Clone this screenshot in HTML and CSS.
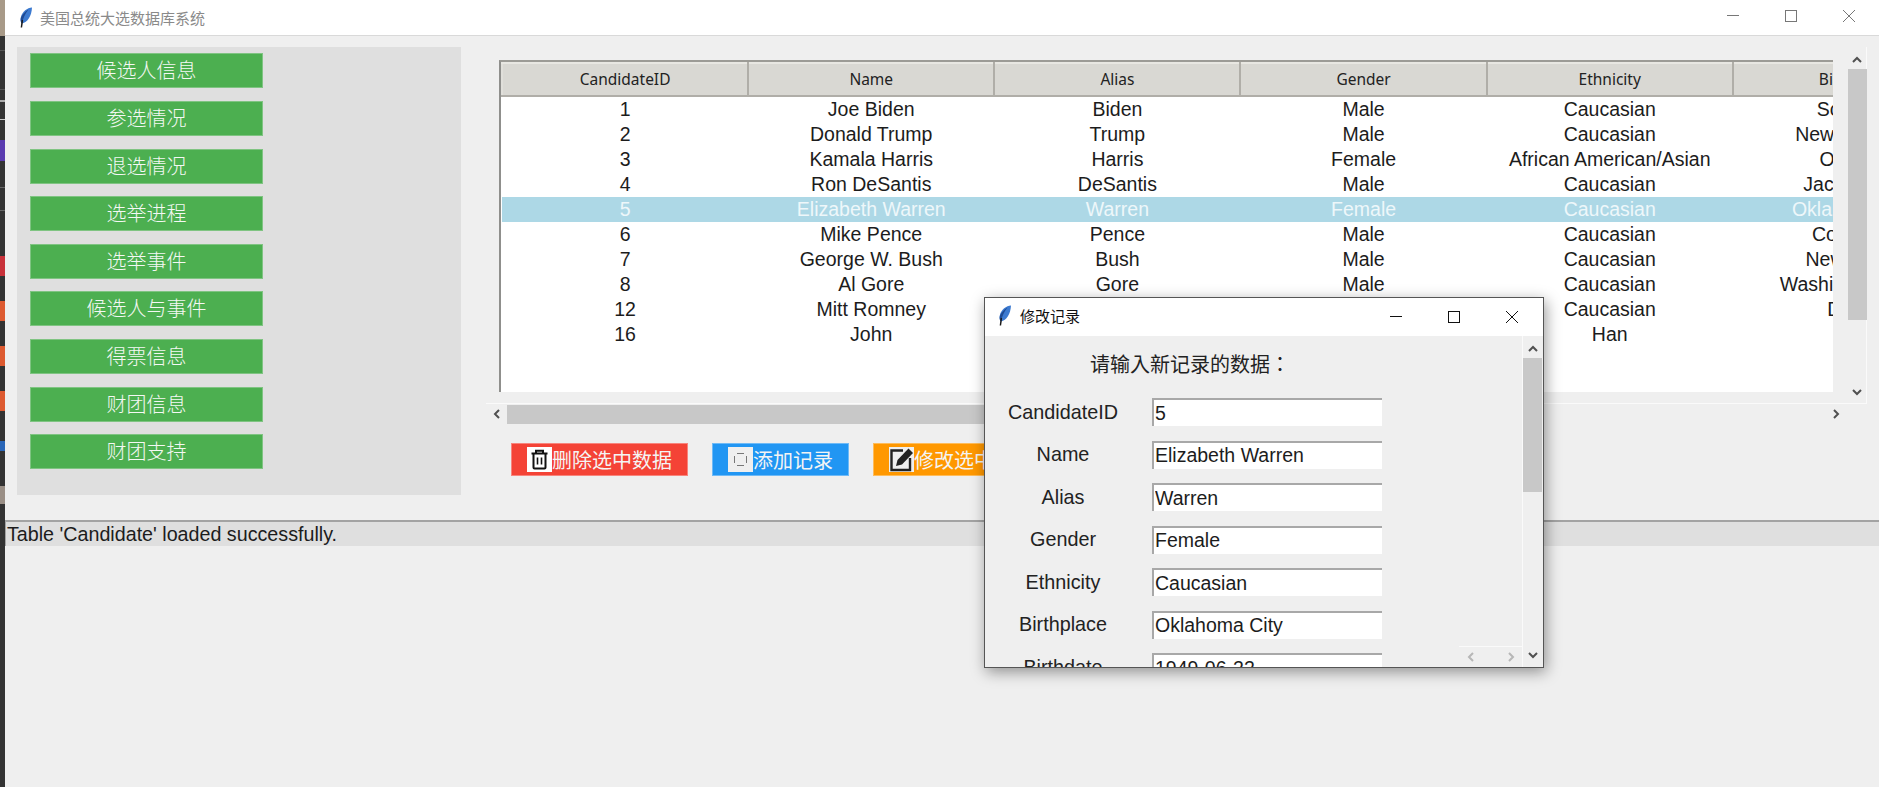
FILE: index.html
```html
<!DOCTYPE html>
<html lang="zh-CN">
<head>
    <meta charset="UTF-8">
    <title>美国总统大选数据库系统</title>
    <link rel="stylesheet" href="styles.css">
</head>
<body>
    <svg class="defs" width="0" height="0">
        <defs>
            <symbol id="feather" viewBox="0 0 14 21">
                <path d="M13 0.5C8.5 0.8 3 4.5 1.8 10.5 1.2 13.5 1.8 15.5 3 16.5 8.5 15.5 12.6 9 13 0.5Z" fill="#3c7ad0"/>
                <path d="M9.5 2.5C6 4.5 2.8 8 1.8 11 1.4 13.5 1.8 15.5 3 16.5 4 11 6 7 9.5 2.5Z" fill="#1d4a94"/>
                <path d="M3.4 13 2.4 20.5" fill="none" stroke="#1a1a1a" stroke-width="1.5"/>
            </symbol>
            <symbol id="up" viewBox="0 0 10 7">
                <path d="M1 6 5 2 9 6" fill="none" stroke="#505050" stroke-width="2"/>
            </symbol>
            <symbol id="down" viewBox="0 0 10 7">
                <path d="M1 1 5 5 9 1" fill="none" stroke="#505050" stroke-width="2"/>
            </symbol>
            <symbol id="left" viewBox="0 0 7 10">
                <path d="M6 1 2 5 6 9" fill="none" stroke="#505050" stroke-width="2"/>
            </symbol>
            <symbol id="right" viewBox="0 0 7 10">
                <path d="M1 1 5 5 1 9" fill="none" stroke="#505050" stroke-width="2"/>
            </symbol>
        </defs>
    </svg>

    <div class="desktop-strip">
        <div class="strip-photo"></div>
        <div class="strip-chevrons"></div>
        <div class="strip-lines"></div>
        <div class="strip-purple"></div>
        <div class="strip-grey"></div>
        <div class="strip-red"></div>
        <div class="strip-orange"></div>
        <div class="strip-orange"></div>
        <div class="strip-orange"></div>
        <div class="strip-search"></div>
        <div class="strip-face"></div>
    </div>

    <div class="window">
        <div class="titlebar">
            <svg class="title-icon"><use href="#feather"/></svg>
            <span class="title-text">美国总统大选数据库系统</span>
            <div class="controls">
                <svg class="ctl" viewBox="0 0 58 35"><path d="M23 15.5H35" stroke="#777" fill="none"/></svg>
                <svg class="ctl" viewBox="0 0 58 35"><rect x="23.5" y="10.5" width="11" height="11" stroke="#777" fill="none"/></svg>
                <svg class="ctl" viewBox="0 0 58 35"><path d="M23 10 35 22M35 10 23 22" stroke="#777" fill="none"/></svg>
            </div>
        </div>

        <div class="main">
            <div class="sidebar">
                <button class="nav-btn">候选人信息</button>
                <button class="nav-btn">参选情况</button>
                <button class="nav-btn">退选情况</button>
                <button class="nav-btn">选举进程</button>
                <button class="nav-btn">选举事件</button>
                <button class="nav-btn">候选人与事件</button>
                <button class="nav-btn">得票信息</button>
                <button class="nav-btn">财团信息</button>
                <button class="nav-btn">财团支持</button>
            </div>

            <div class="content">
                <div class="table-pane">
                    <div class="table-box">
                        <table class="grid">
                            <thead>
                                <tr><th>CandidateID</th><th>Name</th><th>Alias</th><th>Gender</th><th>Ethnicity</th><th>Birthplace</th></tr>
                            </thead>
                            <tbody>
                                <tr><td>1</td><td>Joe Biden</td><td>Biden</td><td>Male</td><td>Caucasian</td><td>Scranton</td></tr>
                                <tr><td>2</td><td>Donald Trump</td><td>Trump</td><td>Male</td><td>Caucasian</td><td>New York City</td></tr>
                                <tr><td>3</td><td>Kamala Harris</td><td>Harris</td><td>Female</td><td>African American/Asian</td><td>Oakland</td></tr>
                                <tr><td>4</td><td>Ron DeSantis</td><td>DeSantis</td><td>Male</td><td>Caucasian</td><td>Jacksonville</td></tr>
                                <tr class="selected"><td>5</td><td>Elizabeth Warren</td><td>Warren</td><td>Female</td><td>Caucasian</td><td>Oklahoma City</td></tr>
                                <tr><td>6</td><td>Mike Pence</td><td>Pence</td><td>Male</td><td>Caucasian</td><td>Columbus</td></tr>
                                <tr><td>7</td><td>George W. Bush</td><td>Bush</td><td>Male</td><td>Caucasian</td><td>New Haven</td></tr>
                                <tr><td>8</td><td>Al Gore</td><td>Gore</td><td>Male</td><td>Caucasian</td><td>Washington, D.C.</td></tr>
                                <tr><td>12</td><td>Mitt Romney</td><td>Romney</td><td>Male</td><td>Caucasian</td><td>Detroit</td></tr>
                                <tr><td>16</td><td>John</td><td>John</td><td>Male</td><td>Han</td><td></td></tr>
                            </tbody>
                        </table>
                    </div>
                    <div class="vscroll">
                        <svg class="arrow-v"><use href="#up"/></svg>
                        <div class="vthumb"></div>
                        <svg class="arrow-v"><use href="#down"/></svg>
                    </div>
                </div>

                <div class="hscroll">
                    <svg class="arrow-h"><use href="#left"/></svg>
                    <div class="hthumb"></div>
                    <svg class="arrow-h"><use href="#right"/></svg>
                </div>

                <div class="actions">
                    <button class="act-btn red">
                        <svg class="act-icon white" viewBox="0 0 25 25">
                            <path d="M4.5 6.5H20.5M9 6V3.8H16V6" fill="none" stroke="#111" stroke-width="2"/>
                            <path d="M6.5 7V20.5Q6.5 21.5 7.5 21.5H17.5Q18.5 21.5 18.5 20.5V7" fill="none" stroke="#111" stroke-width="2"/>
                            <path d="M10.5 10.5V17.5M14.5 10.5V17.5" stroke="#111" stroke-width="1.6"/>
                        </svg>删除选中数据
                    </button>
                    <button class="act-btn blue">
                        <svg class="act-icon pale" viewBox="0 0 25 25">
                            <path d="M9 6.5H16M9 18.5H16M6.5 9V16M18.5 9V16" stroke="#777" fill="none"/>
                        </svg>添加记录
                    </button>
                    <button class="act-btn orange">
                        <svg class="act-icon pale" viewBox="0 0 25 25">
                            <path d="M14 3.5H2.5V23H21V11" fill="none" stroke="#222" stroke-width="2.4"/>
                            <path d="M19.5 1.5 24 6 13 17.5 7 19 8.5 13Z" fill="#222"/>
                        </svg>修改选中数据
                    </button>
                </div>
            </div>
        </div>

        <div class="statusbar">Table 'Candidate' loaded successfully.</div>
    </div>

    <div class="dialog">
        <div class="dialog-title">
            <svg class="dialog-icon"><use href="#feather"/></svg>
            <span class="dialog-text">修改记录</span>
            <div class="controls">
                <svg class="ctl" viewBox="0 0 58 38"><path d="M22 18.5H34" stroke="#111" fill="none"/></svg>
                <svg class="ctl" viewBox="0 0 58 38"><rect x="22.5" y="13.5" width="11" height="11" stroke="#111" fill="none"/></svg>
                <svg class="ctl" viewBox="0 0 58 38"><path d="M22 13 34 25M34 13 22 25" stroke="#111" fill="none"/></svg>
            </div>
        </div>
        <div class="dialog-body">
            <div class="form">
                <div class="form-head" lang="zh-TW">请输入新记录的数据：</div>
                <div class="form-row"><span class="form-label">CandidateID</span><input class="form-input" value="5"></div>
                <div class="form-row"><span class="form-label">Name</span><input class="form-input" value="Elizabeth Warren"></div>
                <div class="form-row"><span class="form-label">Alias</span><input class="form-input" value="Warren"></div>
                <div class="form-row"><span class="form-label">Gender</span><input class="form-input" value="Female"></div>
                <div class="form-row"><span class="form-label">Ethnicity</span><input class="form-input" value="Caucasian"></div>
                <div class="form-row"><span class="form-label">Birthplace</span><input class="form-input" value="Oklahoma City"></div>
                <div class="form-row"><span class="form-label">Birthdate</span><input class="form-input" value="1949-06-22"></div>
            </div>
            <div class="dialog-hscroll">
                <svg class="arrow-h faint"><use href="#left"/></svg>
                <svg class="arrow-h faint"><use href="#right"/></svg>
            </div>
            <div class="dialog-vscroll">
                <svg class="arrow-v"><use href="#up"/></svg>
                <div class="dialog-thumb"></div>
                <svg class="arrow-v"><use href="#down"/></svg>
            </div>
        </div>
    </div>
</body>
</html>
```

FILE: styles.css
```css
html, body {
    margin: 0;
    padding: 0;
    height: 787px;
    overflow: hidden;
}

body {
    display: flex;
    font-family: "Liberation Sans", "Noto Sans CJK SC", sans-serif;
    background-color: #efefef;
    color: #1c1c1c;
}

.defs {
    position: absolute;
}

/* bit of the desktop showing left of the window */
.desktop-strip {
    width: 5px;
    flex: none;
    background-color: #333;
    display: flex;
    flex-direction: column;
}

.strip-photo {
    height: 36px;
    background-color: #a89a88;
}

.strip-chevrons {
    height: 40px;
    margin-top: 14px;
    border-top: 1px solid #555;
    border-bottom: 1px solid #555;
    box-sizing: border-box;
}

.strip-lines {
    height: 20px;
    margin-top: 10px;
    border-top: 2px solid #aaa;
    border-bottom: 1px solid #ccc;
    box-sizing: border-box;
}

.strip-purple {
    height: 21px;
    margin-top: 20px;
    background-color: #5a3bb0;
}

.strip-grey {
    height: 24px;
    margin-top: 26px;
    border-top: 1px solid #666;
    border-bottom: 1px solid #666;
    box-sizing: border-box;
}

.strip-red {
    height: 20px;
    margin-top: 45px;
    background-color: #c8313a;
}

.strip-orange {
    height: 20px;
    margin-top: 25px;
    background-color: #dd5a30;
}

.strip-search {
    height: 10px;
    margin-top: 30px;
    background-color: #2a66b8;
}

.strip-face {
    height: 18px;
    margin-top: 35px;
    background-color: #9a8f86;
}

.window {
    flex: 1;
    min-width: 0;
    display: flex;
    flex-direction: column;
}

.titlebar {
    height: 35px;
    flex: none;
    display: flex;
    align-items: center;
    background-color: #fff;
    border-bottom: 1px solid #d9d9d9;
}

.title-icon {
    width: 14px;
    height: 21px;
    margin-left: 14px;
}

.title-text {
    margin-left: 7px;
    font-size: 15px;
    color: #8a8a8a;
}

.controls {
    margin-left: auto;
    display: flex;
    margin-right: 1px;
}

.ctl {
    width: 58px;
    height: 35px;
}

.main {
    height: 484px;
    flex: none;
    display: flex;
    align-items: flex-start;
}

.sidebar {
    width: 444px;
    height: 448px;
    box-sizing: border-box;
    margin: 11px 0 0 12px;
    padding: 6.4px 0 0 13px;
    background-color: #dfdfdf;
    display: flex;
    flex-direction: column;
    gap: 12.6px;
}

.nav-btn {
    width: 233px;
    height: 35px;
    flex: none;
    border: 1px solid #7fc482;
    background-color: #4caf50;
    color: #f4f8f4;
    font-family: inherit;
    font-size: 20px;
    font-weight: 300;
    line-height: 1;
    padding: 1px 0 0;
}

.content {
    margin: 11px 0 0 25px;
    width: 1393px;
}

.table-pane {
    display: flex;
    height: 357px;
    width: 1381px;
    box-sizing: border-box;
    padding-left: 13px;
    border-right: 1px solid #fafafa;
    border-bottom: 1px solid #fafafa;
}

.table-box {
    width: 1334px;
    height: 332px;
    flex: none;
    margin-top: 13px;
    box-sizing: border-box;
    border-top: 2px solid #9c9b96;
    border-left: 2px solid #8f8f8c;
    background-color: #fff;
    overflow: hidden;
}

.grid {
    table-layout: fixed;
    width: 1479px;
    border-collapse: collapse;
}

.grid th {
    height: 33px;
    box-sizing: border-box;
    padding: 0 0 2px;
    font-family: "Noto Sans", sans-serif;
    font-size: 15.5px;
    font-weight: 400;
    background-color: #d9d8d3;
    border: 2px solid #f0efeb;
    border-color: #e8e7e2 #b0aea8 #b0aea8 #e0dfda;
    color: #222;
}

.grid td {
    height: 25px;
    padding: 0;
    text-align: center;
    font-size: 19.5px;
    line-height: 25px;
    white-space: nowrap;
    overflow: hidden;
    color: #1c1c1c;
}

.grid td:last-child {
    overflow: visible;
}

.selected td {
    background-color: #add8e6;
    color: #eef7fa;
}

.vscroll {
    width: 20px;
    margin-left: 14px;
    display: flex;
    flex-direction: column;
    align-items: center;
    flex: none;
}

.arrow-v {
    width: 10px;
    height: 7px;
    flex: none;
}

.arrow-h {
    width: 7px;
    height: 10px;
    flex: none;
}

.faint {
    opacity: 0.35;
}

.vscroll .arrow-v:first-child {
    margin: 9px 0 6px;
}

.vthumb {
    width: 19px;
    height: 251px;
    background-color: #c8c8c8;
    margin-bottom: 69px;
}

.hscroll {
    height: 20px;
    width: 1354px;
    display: flex;
    align-items: center;
    padding-left: 7px;
    box-sizing: border-box;
}

.hthumb {
    width: 800px;
    height: 19px;
    margin-left: 7px;
    margin-right: auto;
    background-color: #c8c8c8;
}

.actions {
    display: flex;
    gap: 24px;
    margin: 19px 0 0 25px;
}

.act-btn {
    height: 33px;
    padding: 0 0 0 15px;
    border: 1px solid rgba(255, 255, 255, 0.35);
    display: flex;
    align-items: center;
    font-family: inherit;
    font-size: 20px;
    color: #f4f4f4;
}

.act-btn.red {
    width: 177px;
    background-color: #f44336;
}

.act-btn.blue {
    width: 137px;
    background-color: #2196f3;
}

.act-btn.orange {
    width: 190px;
    background-color: #ff9800;
}

.act-icon {
    width: 25px;
    height: 25px;
    flex: none;
}

.act-icon.white {
    background-color: #fff;
}

.act-icon.pale {
    background-color: #efefef;
}

.statusbar {
    height: 26px;
    box-sizing: border-box;
    background-color: #dfdfdf;
    border-top: 2px solid #a3a3a3;
    border-left: 1px solid #a3a3a3;
    padding-left: 1px;
    font-size: 19.7px;
    line-height: 24px;
    white-space: nowrap;
}

/* second toplevel floating over the main window */
.dialog {
    position: absolute;
    left: 984px;
    top: 297px;
    width: 560px;
    height: 371px;
    box-sizing: border-box;
    border: 1px solid #555;
    background-color: #efefef;
    box-shadow: 2px 4px 14px rgba(0, 0, 0, 0.4);
    display: flex;
    flex-direction: column;
}

.dialog-title {
    height: 38px;
    flex: none;
    display: flex;
    align-items: center;
    background-color: #fff;
}

.dialog-icon {
    width: 14px;
    height: 21px;
    margin: 0 0 3px 13px;
}

.dialog-text {
    margin: 0 0 4px 8px;
    font-size: 15px;
    color: #111;
}

.dialog-title .controls {
    margin-right: 1px;
}

.dialog-title .ctl {
    height: 38px;
}

.dialog-body {
    flex: 1;
    min-height: 0;
    position: relative;
    overflow: hidden;
}

.form {
    padding-top: 18px;
}

.form-head {
    margin-left: 105px;
    height: 44px;
    font-family: "Noto Sans CJK TC", sans-serif;
    font-size: 20px;
    line-height: 20px;
    color: #222;
}

.form-row {
    display: flex;
    align-items: center;
    height: 28px;
    margin-bottom: 14.5px;
}

.form-label {
    width: 156px;
    margin-right: 11px;
    text-align: center;
    font-size: 19.8px;
    color: #222;
}

.form-input {
    width: 230px;
    height: 28px;
    box-sizing: border-box;
    padding: 0 0 0 1px;
    border: none;
    border-top: 2px solid #a8a8a8;
    border-left: 2px solid #a8a8a8;
    background-color: #fff;
    font-family: inherit;
    font-size: 19.5px;
    color: #1c1c1c;
}

.dialog-vscroll {
    position: absolute;
    top: 0;
    right: 1px;
    bottom: 0;
    width: 19px;
    display: flex;
    flex-direction: column;
    align-items: center;
    background-color: #efefef;
    border-left: 1px solid #fafafa;
}

.dialog-vscroll .arrow-v:first-child {
    margin: 9px 0 6px;
}

.dialog-thumb {
    width: 19px;
    height: 134px;
    background-color: #c8c8c8;
}

.dialog-vscroll .arrow-v:last-child {
    margin-top: auto;
    margin-bottom: 8px;
}

.dialog-hscroll {
    position: absolute;
    right: 20px;
    bottom: 0;
    width: 64px;
    height: 21px;
    box-sizing: border-box;
    border-top: 1px solid #fafafa;
    background-color: #efefef;
    display: flex;
    align-items: center;
    justify-content: space-between;
    padding: 0 8px;
}
```
